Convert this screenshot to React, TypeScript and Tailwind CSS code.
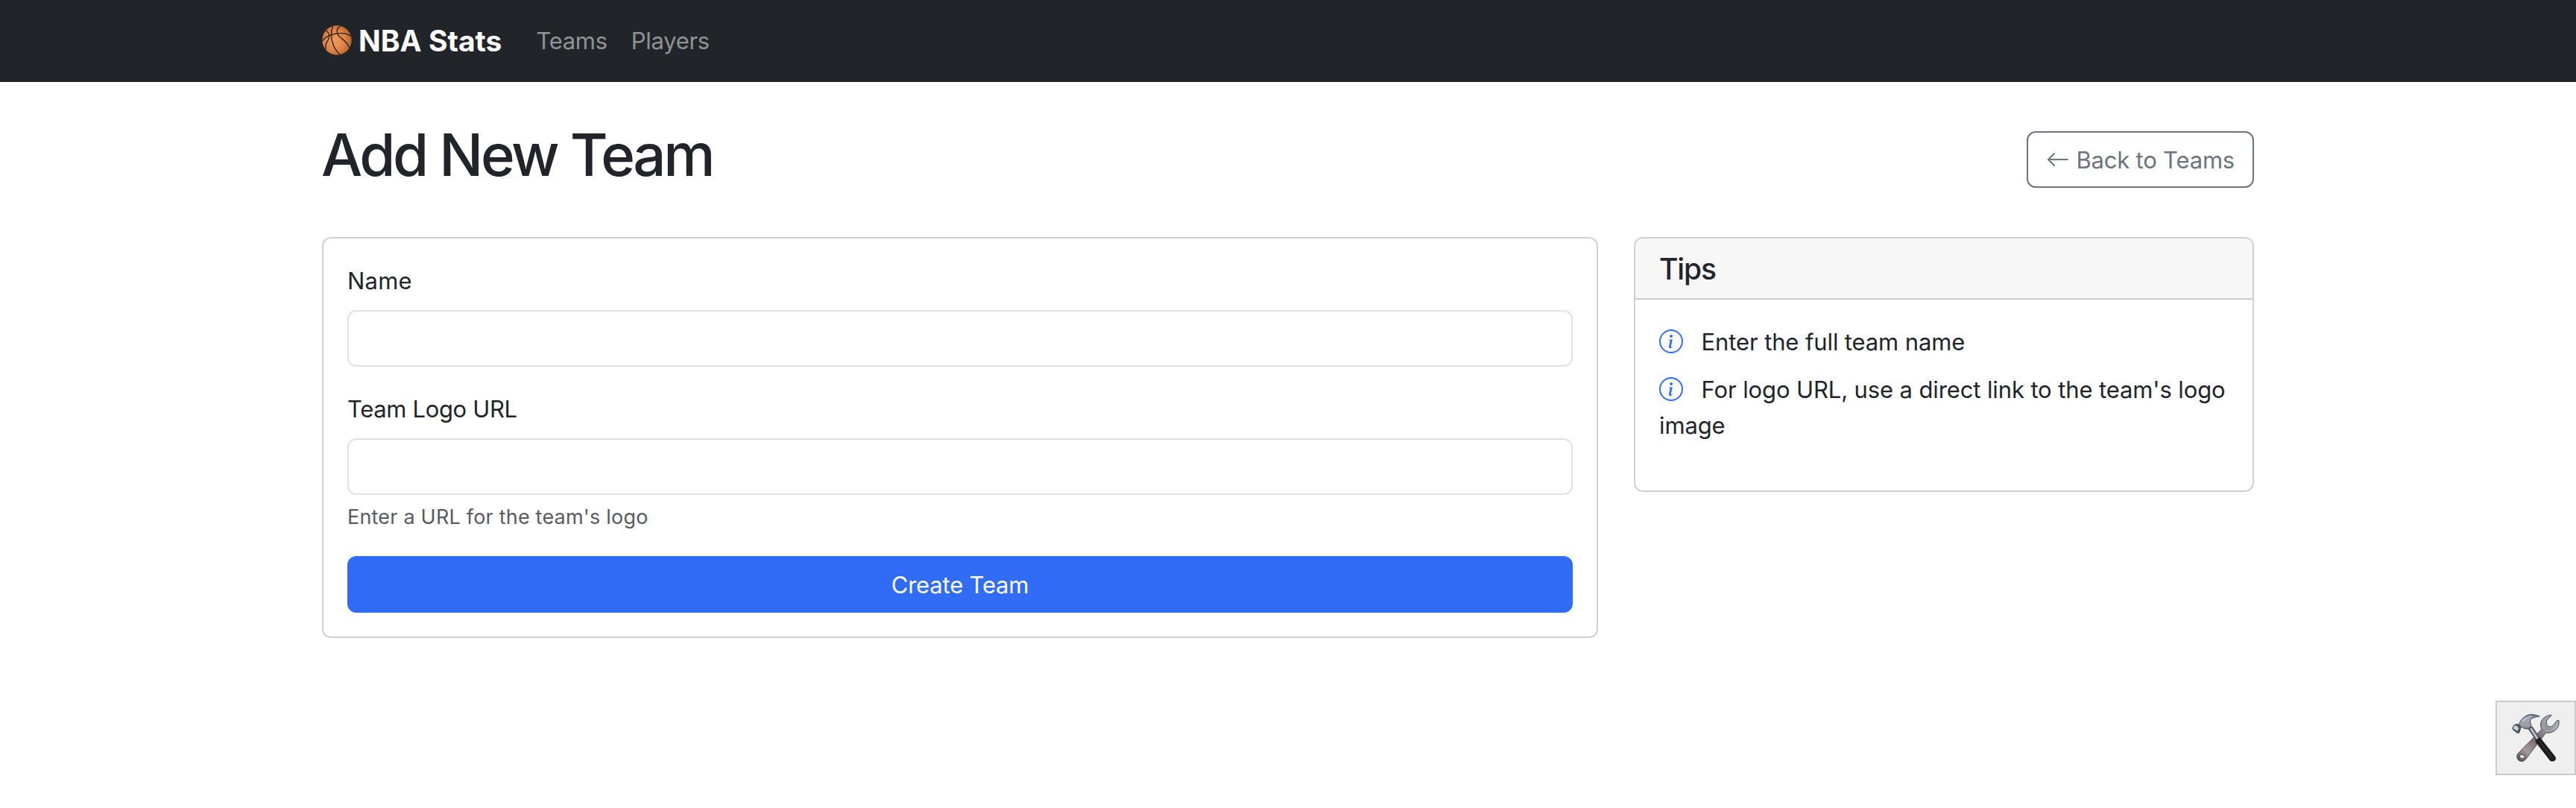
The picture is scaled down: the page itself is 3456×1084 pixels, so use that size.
import type { ReactNode } from "react";

function Basketball() {
  return (
    <svg className="block size-[40px]" viewBox="0 0 120 120" fill="none">
      <defs>
        <radialGradient id="ball" cx="0.42" cy="0.5" r="0.6">
          <stop offset="0" stopColor="#f09c5a" />
          <stop offset="0.6" stopColor="#df8446" />
          <stop offset="1" stopColor="#b5602f" />
        </radialGradient>
      </defs>
      <circle cx="60" cy="60" r="59" fill="url(#ball)" />
      <g stroke="#2a211c" strokeWidth="4" strokeLinecap="round">
        <path d="M2 62C12 46 38 33 72 32c18-1 34 4 45 12" />
        <path d="M43 4c-8 22-7 50 3 76 7 17 16 29 26 37" />
        <path d="M74 3C61 9 57 24 63 36c8 16 36 24 47 53" />
        <path d="M17 22c14 11 16 26 6 40-8 12-10 24-8 34" />
      </g>
    </svg>
  );
}

function Tools() {
  return (
    <svg className="block h-[66px] w-[66px]" viewBox="206 141 198 198" fill="none">
      <defs>
        <linearGradient id="steel" x1="230" y1="330" x2="385" y2="150" gradientUnits="userSpaceOnUse">
          <stop offset="0" stopColor="#5d4a4e" />
          <stop offset="0.22" stopColor="#a59a9f" />
          <stop offset="0.5" stopColor="#77666b" />
          <stop offset="0.68" stopColor="#8e9097" />
          <stop offset="1" stopColor="#b4b7bf" />
        </linearGradient>
        <linearGradient id="head" x1="260" y1="145" x2="262" y2="210" gradientUnits="userSpaceOnUse">
          <stop offset="0" stopColor="#5d6470" />
          <stop offset="0.3" stopColor="#a4abb8" />
          <stop offset="0.75" stopColor="#9a9aa2" />
          <stop offset="1" stopColor="#504e55" />
        </linearGradient>
      </defs>
      <path
        d="M368 148C348 148 327 163 325 183c-1 9 1 16 4 22L234 302c-9 12-4 29 10 32 9 2 17-3 22-10l80-105c21 4 46-9 51-31 2-8 2-14 0-19l-7 1-14 19c-7 7-19 7-24 0-6-7-5-17 1-24l15-15z"
        fill="url(#steel)"
        stroke="#4b494f"
        strokeWidth="3"
        strokeLinejoin="round"
      />
      <ellipse cx="250" cy="315" rx="10" ry="8" transform="rotate(20 250 315)" fill="#efefef" stroke="#514b4f" strokeWidth="3" />
      <path d="M332 188c2 15 12 25 27 25 15-1 27-9 32-22" stroke="#c3c5cb" strokeWidth="2.5" />
      <path d="M276 204l14-10 31 46-14 10z" fill="#777a84" stroke="#35353b" strokeWidth="3" />
      <path d="M285 202l28 43" stroke="#d6dbe5" strokeWidth="5" />
      <path d="M304 250l14-11c4-1 8 3 11 7l54 68c6 9 2 18-7 20-7 2-13-1-18-8l-52-67c-3-4-3-7-2-9z" fill="#1d1d1f" />
      <path d="M318 250l54 72" stroke="#343437" strokeWidth="4" strokeLinecap="round" />
      <path
        d="M238 184c7-21 26-36 46-38 14-1 25 2 36 7-16 2-29 6-36 13-2 8-1 14 3 22l-9 17-22-4c-5-4-10-7-17-5z"
        fill="url(#head)"
        stroke="#464b55"
        strokeWidth="3"
        strokeLinejoin="round"
      />
      <path d="M254 172c8-12 19-18 36-20" stroke="#c8d0dd" strokeWidth="4" strokeLinecap="round" />
      <path d="M218 187l12-5c5 2 14 7 17 13-2 9-4 17-8 25-3 3-8 2-11 0l-15-12c-5-4-2-9 0-13 1-3 2-6 5-8z" fill="#4d5058" />
      <path d="M220 189c7 1 14 6 17 11l-5 13-18-11z" fill="#cbd3df" />
    </svg>
  );
}

function ArrowLeft() {
  return (
    <svg className="inline-block size-8 align-[-0.125em]" viewBox="0 0 16 16" fill="currentColor">
      <path
        fillRule="evenodd"
        d="M15 8a.5.5 0 0 0-.5-.5H2.707l3.147-3.146a.5.5 0 1 0-.708-.708l-4 4a.5.5 0 0 0 0 .708l4 4a.5.5 0 0 0 .708-.708L2.707 8.5H14.5A.5.5 0 0 0 15 8"
      />
    </svg>
  );
}

function InfoCircle() {
  return (
    <svg className="mr-4 inline-block size-8 align-[-0.125em] text-[#306cf5]" viewBox="0 0 16 16" fill="currentColor">
      <path d="M8 15A7 7 0 1 1 8 1a7 7 0 0 1 0 14m0 1A8 8 0 1 0 8 0a8 8 0 0 0 0 16" />
      <path d="m8.93 6.588-2.29.287-.082.38.45.083c.294.07.352.176.288.469l-.738 3.468c-.194.897.105 1.319.808 1.319.545 0 1.178-.252 1.465-.598l.088-.416c-.2.176-.492.246-.686.246-.275 0-.375-.193-.304-.533zM9 4.5a1 1 0 1 1-2 0 1 1 0 0 1 2 0" />
    </svg>
  );
}

function Tip({ children }: { children: ReactNode }) {
  return (
    <li className="mb-4">
      <InfoCircle /> {children}
    </li>
  );
}

const labelClass = "mb-[15px] block pt-px";
const inputClass = "block h-[76px] w-full rounded-xl border-2 border-[#dee2e6] bg-white px-6 outline-none";

export default function App() {
  return (
    <div className="relative h-[1084px] overflow-hidden bg-white font-[Inter,'Liberation_Sans',sans-serif] text-[31px] leading-[48px] tracking-[-0.12px] text-[#212529]">
      <nav className="h-[110px] border-b border-[#2a1e28] bg-[#212529]">
        <div className="mx-auto flex h-[108px] w-[2592px] items-center">
          <a className="flex items-center gap-[9px] text-[39px] leading-[60px] font-bold tracking-normal text-white">
            <Basketball />
            <span className="pt-[2px]">NBA Stats</span>
          </a>
          <div className="ml-[46px] flex gap-8 pt-[2px] tracking-[-0.3px] text-[#909294]">
            <a>Teams</a>
            <a>Players</a>
          </div>
        </div>
      </nav>

      <main className="mx-auto w-[2592px] pt-12">
        <header className="mb-12 flex h-28 items-center justify-between">
          <h1 className="-mt-3 -ml-px text-[78px] leading-[96px] font-medium tracking-[-3.4px]">Add New Team</h1>
          <a className="rounded-xl border-2 border-[#6c757d] px-6 pt-[13px] pb-[11px] tracking-[-0.2px] whitespace-nowrap text-[#6c757d]">
            <ArrowLeft /> Back to Teams
          </a>
        </header>

        <div className="flex items-start gap-12">
          <form className="w-[1712px] rounded-xl border-2 border-[#d0d0d1] p-8">
            <div className="mb-8 tracking-[0.2px]">
              <label className={labelClass}>Name</label>
              <input type="text" className={inputClass} />
            </div>
            <div className="mb-8 tracking-[-0.35px]">
              <label className={labelClass}>Team Logo URL</label>
              <input type="text" className={inputClass} />
              <p className="mt-[9px] -mb-px text-[27px] leading-[42px] tracking-[0.2px] text-[#595c5f]">
                Enter a URL for the team's logo
              </p>
            </div>
            <button type="button" className="block h-[76px] w-full rounded-xl bg-[#306cf5] pt-[2px] tracking-[-0.2px] text-white">
              Create Team
            </button>
          </form>

          <aside className="w-[832px] overflow-hidden rounded-xl border-2 border-[#d0d0d1]">
            <h5 className="border-b-2 border-[#cbcbcc] bg-[#f7f7f7] px-8 pt-[17px] pb-[15px] text-[39px] leading-[48px] font-medium tracking-[-1.1px]">
              Tips
            </h5>
            <ul className="px-8 pt-[33px] pb-[47px]">
              <Tip>Enter the full team name</Tip>
              <Tip>For logo URL, use a direct link to the team's logo image</Tip>
            </ul>
          </aside>
        </div>
      </main>

      <button
        type="button"
        className="absolute right-0 bottom-[44px] flex h-[100px] w-[108px] items-center justify-center border-2 border-[#cbcbcb] bg-[#efefef]"
      >
        <Tools />
      </button>
    </div>
  );
}
